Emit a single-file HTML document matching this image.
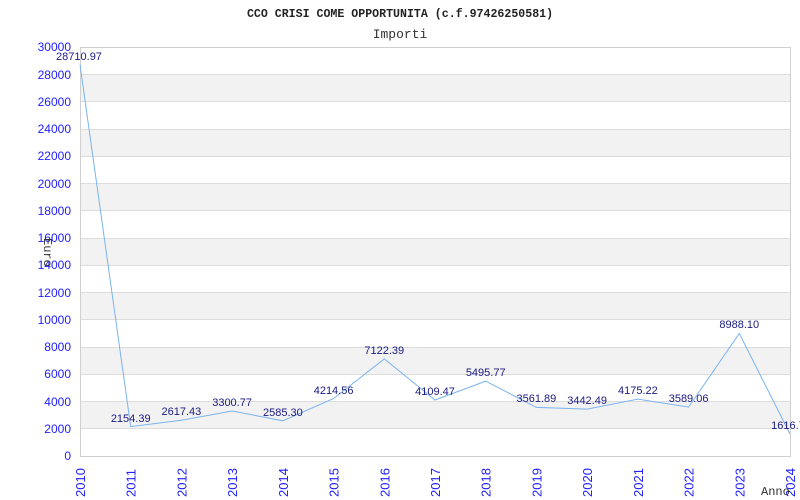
<!DOCTYPE html>
<html><head><meta charset="utf-8"><style>
html,body{margin:0;padding:0;background:#fff;width:800px;height:500px;overflow:hidden}
svg{display:block}
.t{font-family:"Liberation Sans",sans-serif;font-size:11px}
.y{fill:#2020ff;text-anchor:end;font-size:12px}
.d{fill:#1a1a80;text-anchor:middle}
.x{fill:#2020ff;font-size:13px}
.m{font-family:"Liberation Mono","DejaVu Sans Mono",monospace}
</style></head><body>
<svg width="800" height="500" viewBox="0 0 800 500">
<g fill="#f2f2f2">
<rect x="80" y="401.5" width="710" height="27.3"/>
<rect x="80" y="347" width="710" height="27.3"/>
<rect x="80" y="292.5" width="710" height="27.3"/>
<rect x="80" y="238" width="710" height="27.3"/>
<rect x="80" y="183.5" width="710" height="27.3"/>
<rect x="80" y="129" width="710" height="27.3"/>
<rect x="80" y="74.5" width="710" height="27.3"/>
</g>
<g stroke="#dcdcdc" stroke-width="1">
<line x1="80" x2="790" y1="428.5" y2="428.5"/><line x1="80" x2="790" y1="401.5" y2="401.5"/>
<line x1="80" x2="790" y1="374.5" y2="374.5"/><line x1="80" x2="790" y1="347.5" y2="347.5"/>
<line x1="80" x2="790" y1="319.5" y2="319.5"/><line x1="80" x2="790" y1="292.5" y2="292.5"/>
<line x1="80" x2="790" y1="265.5" y2="265.5"/><line x1="80" x2="790" y1="238.5" y2="238.5"/>
<line x1="80" x2="790" y1="210.5" y2="210.5"/><line x1="80" x2="790" y1="183.5" y2="183.5"/>
<line x1="80" x2="790" y1="156.5" y2="156.5"/><line x1="80" x2="790" y1="129.5" y2="129.5"/>
<line x1="80" x2="790" y1="101.5" y2="101.5"/><line x1="80" x2="790" y1="74.5" y2="74.5"/>
</g>
<rect x="80.5" y="47.5" width="710" height="409" fill="none" stroke="#d0d0d0"/>
<polyline fill="none" stroke="#7ab4f0" stroke-width="1" points="80,64.6 130.7,426.6 181.4,420.3 232.1,411 282.9,420.8 333.6,398.5 384.3,358.9 435,400 485.7,381.1 536.4,407.4 587.1,409.1 637.9,399.1 688.6,407.1 739.3,333.5 790,434"/>
<g class="t y">
<text x="71" y="460">0</text><text x="71" y="433">2000</text><text x="71" y="406">4000</text>
<text x="71" y="378">6000</text><text x="71" y="351">8000</text><text x="71" y="324">10000</text>
<text x="71" y="297">12000</text><text x="71" y="269">14000</text><text x="71" y="242">16000</text>
<text x="71" y="215">18000</text><text x="71" y="188">20000</text><text x="71" y="160">22000</text>
<text x="71" y="133">24000</text><text x="71" y="106">26000</text><text x="71" y="79">28000</text>
<text x="71" y="51">30000</text>
</g>
<g class="t d">
<text x="79" y="60">28710.97</text><text x="130.7" y="422">2154.39</text><text x="181.4" y="415">2617.43</text>
<text x="232.1" y="406">3300.77</text><text x="282.9" y="416">2585.30</text><text x="333.6" y="394">4214.56</text>
<text x="384.3" y="354">7122.39</text><text x="435" y="395">4109.47</text><text x="485.7" y="376">5495.77</text>
<text x="536.4" y="402">3561.89</text><text x="587.1" y="404">3442.49</text><text x="637.9" y="394">4175.22</text>
<text x="688.6" y="402">3589.06</text><text x="739.3" y="328">8988.10</text><text x="788" y="429">1616.7</text>
</g>
<g class="t x">
<text transform="translate(85,497) rotate(-90)">2010</text>
<text transform="translate(135.7,497) rotate(-90)">2011</text>
<text transform="translate(186.4,497) rotate(-90)">2012</text>
<text transform="translate(237.1,497) rotate(-90)">2013</text>
<text transform="translate(287.9,497) rotate(-90)">2014</text>
<text transform="translate(338.6,497) rotate(-90)">2015</text>
<text transform="translate(389.3,497) rotate(-90)">2016</text>
<text transform="translate(440,497) rotate(-90)">2017</text>
<text transform="translate(490.7,497) rotate(-90)">2018</text>
<text transform="translate(541.4,497) rotate(-90)">2019</text>
<text transform="translate(592.1,497) rotate(-90)">2020</text>
<text transform="translate(642.9,497) rotate(-90)">2021</text>
<text transform="translate(693.6,497) rotate(-90)">2022</text>
<text transform="translate(744.3,497) rotate(-90)">2023</text>
<text transform="translate(795,497) rotate(-90)">2024</text>
</g>
<text class="m" x="400" y="17" text-anchor="middle" font-size="11.6" font-weight="bold" fill="#222">CCO CRISI COME OPPORTUNITA (c.f.97426250581)</text>
<text class="m" x="400" y="38" text-anchor="middle" font-size="13" fill="#333">Importi</text>
<text class="m" transform="translate(44,238) rotate(90)" font-size="12" fill="#333">Euro</text>
<text class="m" x="761" y="495" font-size="12" fill="#333">Anno</text>
</svg>
</body></html>
